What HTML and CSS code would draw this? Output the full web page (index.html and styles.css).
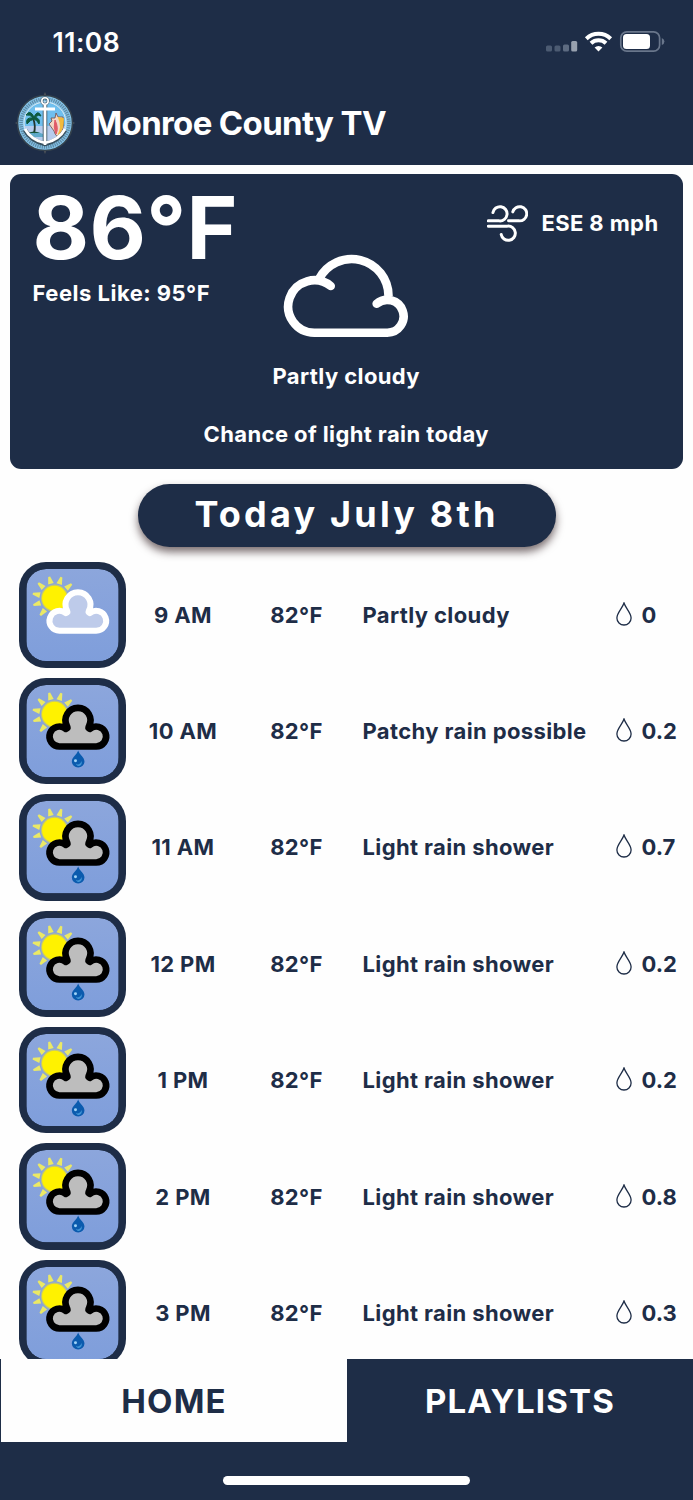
FILE: index.html
```
<!DOCTYPE html>
<html lang="en">
<head>
  <meta charset="UTF-8">
  <title>Monroe County TV</title>
  <link rel="stylesheet" href="styles.css">
</head>
<body>

<!-- shared icons -->
<svg class="defs" width="0" height="0">
  <defs>
    <linearGradient id="sky" x1="0" y1="0" x2="0" y2="1">
      <stop offset="0" stop-color="#8ca6dc"/>
      <stop offset="1" stop-color="#7f9edb"/>
    </linearGradient>
    <path id="ray" d="M-8.500 -45 L8.500 -45 L3 -67 L-3 -67 Z"/>
    <path id="puff" d="M100 185 A30 30 0 1 1 119 132 L124 129 L122.500 124 A37.500 37.500 0 1 1 188.500 124 L187 129 L191 132 A30 30 0 1 1 210 185 Z"/>
    <symbol id="sun" viewBox="0 0 278 278">
      <rect width="278" height="278" fill="url(#sky)"/>
      <g transform="translate(85 88)">
        <g fill="#ebe965">
          <use href="#ray" transform="rotate(-140)"/>
          <use href="#ray" transform="rotate(-108)"/>
          <use href="#ray" transform="rotate(-78)"/>
          <use href="#ray" transform="rotate(-47)"/>
          <use href="#ray" transform="rotate(-14)"/>
          <use href="#ray" transform="rotate(18)"/>
          <use href="#ray" transform="rotate(50)"/>
        </g>
        <circle r="41" fill="#bfc47a"/>
        <circle r="37.500" fill="#fff200"/>
      </g>
    </symbol>
    <symbol id="partly" viewBox="0 0 278 278">
      <use href="#sun" width="278" height="278"/>
      <use href="#puff" y="1" fill="#becbea" stroke="#fff" stroke-width="18" stroke-linejoin="round"/>
    </symbol>
    <symbol id="rain" viewBox="0 0 278 278">
      <use href="#sun" width="278" height="278"/>
      <use href="#puff" fill="#bdbdbd" stroke="#000" stroke-width="20" stroke-linejoin="round"/>
      <path d="M156 197 C160 210 175 217 175 230 A19 18 0 0 1 137 230 C137 217 152 210 156 197 Z" fill="#0b5bae"/>
      <path d="M149 236 C153 241 163 240 166 229 C171 243 154 250 149 236 Z" fill="#3f94d6"/>
      <circle cx="148" cy="228" r="4.500" fill="#9fd2f7"/>
    </symbol>
    <symbol id="drop" viewBox="0 0 16 24">
      <path d="M8 1 C6.500 6 0.900 11 0.900 15.900 A7.100 7.100 0 0 0 15.100 15.900 C15.100 11 9.500 6 8 1 Z" fill="none" stroke="#1e2d47" stroke-width="1.300"/>
    </symbol>
  </defs>
</svg>

<div class="phone">
  <div class="status-bar">
    <span class="clock">11:08</span>
    <svg class="status-icons" width="120" height="24" viewBox="0 0 120 24">
      <rect x="0" y="15.500" width="6" height="6" rx="1.500" fill="#4c5b72"/>
      <rect x="8.500" y="15.500" width="6" height="6" rx="1.500" fill="#4c5b72"/>
      <rect x="17" y="14.500" width="6" height="7" rx="1.500" fill="#5d6b81"/>
      <rect x="25.200" y="11" width="6" height="10.500" rx="1.500" fill="#98a1af"/>
      <g fill="none" stroke="#fff" stroke-width="4">
        <path d="M40.300 8.700 A17.800 17.800 0 0 1 64.700 8.700"/>
        <path d="M45 13.300 A11 11 0 0 1 60 13.300"/>
      </g>
      <path d="M52.500 21.500 L48.600 17.500 A5.600 5.600 0 0 1 56.400 17.500 Z" fill="#fff"/>
      <rect x="74.800" y="1.800" width="38.800" height="19.400" rx="6" fill="none" stroke="#69768b" stroke-width="1.700"/>
      <rect x="77" y="4" width="27" height="15" rx="3.500" fill="#fff"/>
      <path d="M115.800 8 Q118.400 9 118.400 11.500 Q118.400 14 115.800 15 Z" fill="#69768b"/>
    </svg>
  </div>

  <header class="app-header">
    <svg class="seal" width="60" height="62" viewBox="-30 -31 60 62">
      <path d="M0 -31 L2 -26 H-2 Z M0 31 L2 26 H-2 Z M-30 0 L-26 -2 V2 Z M30 0 L26 -2 V2 Z" fill="#50555b"/>
      <circle r="27.500" fill="#85c3e8" stroke="#35424d" stroke-width="1.600"/>
      <circle r="24" fill="none" stroke="#5f8ba6" stroke-width="3.500" stroke-dasharray="1.200 1"/>
      <circle r="21" fill="#6fbfee" stroke="#dceaf2" stroke-width="1"/>
      <path d="M-20.500 3 H20.500 A21 21 0 0 1 -20.500 3 Z" fill="#b7cdee"/>
      <path d="M-18 11 Q-10 7 -2 11 L-2 14 H-16 Z" fill="#5fa9c9"/>
      <!-- palm -->
      <path d="M-12 -5 Q-9 3 -11 10" fill="none" stroke="#23342b" stroke-width="1.800"/>
      <path d="M-11 -6 Q-15 -14 -19 -8 Q-15 -9 -12 -5 Q-20 -6 -18 1 Q-15 -3 -11 -4 Q-8 -3 -6 1 Q-4 -4 -10 -6 Q-6 -9 -4 -7 Q-7 -14 -11 -6 Z" fill="#0d5a3f" stroke="#0d5a3f" stroke-width="1"/>
      <path d="M-17 10 Q-11 7 -5 10 Z" fill="#17553c"/>
      <!-- conch shell -->
      <path d="M11 -10 L13 -6 L18 -6 Q20 4 15 13 Q11 15 9 8 L4 1 L7 -2 L6 -5 L10 -5 Z" fill="#f3d6c4" stroke="#6d4b48" stroke-width=".8"/>
      <path d="M14 -5 Q18 4 13.500 12 Q18 5 18 -4 Z" fill="#f2ba3d" stroke="#f2ba3d" stroke-width="1.800"/>
      <path d="M10 -3 Q14 5 11 11 Q8 4 10 -3 Z" fill="#e05a68" stroke="#e05a68" stroke-width="1"/>
      <!-- anchor -->
      <path d="M-20 7 Q-14 18 0 21 Q14 18 20 7 M0 -18 V22" fill="none" stroke="#37505f" stroke-width="4.500"/>
      <circle cy="-22" r="3.200" fill="none" stroke="#4b6474" stroke-width="3"/>
      <path d="M-20 6 Q-14 17 0 20 Q14 17 20 6 M0 -18 V22 M-10 -14 H10" fill="none" stroke="#fff" stroke-width="2.800"/>
      <circle cy="-22" r="3.200" fill="none" stroke="#fff" stroke-width="1.600"/>
    </svg>
    <h1>Monroe County TV</h1>
  </header>

  <section class="current">
    <div class="temps">
      <div class="temp">86°F</div>
      <div class="feels">Feels Like: 95°F</div>
    </div>
    <div class="sky">
      <svg width="126" height="84" viewBox="283 254 126 84">
        <g fill="none" stroke="#fff" stroke-width="8.600" stroke-linecap="round">
          <path d="M330.700 286 A26.200 26.200 0 1 0 314.300 332.700 H387.300 A16.400 16.400 0 1 0 376.700 303.700"/>
          <path d="M319 279 A36.800 36.800 0 0 1 388.500 296" stroke-linecap="butt"/>
        </g>
      </svg>
      <p>Partly cloudy</p>
    </div>
    <div class="wind">
      <svg width="41" height="39" viewBox="200 118 124 118">
        <path d="M204 169 H237 A21.500 21.500 0 1 0 218 144 M265 169 H297 A21.500 21.500 0 1 0 278 142 M204 185 H262 A21.500 21.500 0 1 1 243 210" fill="none" stroke="#fff" stroke-width="9" stroke-linecap="round"/>
      </svg>
      <span>ESE 8 mph</span>
    </div>
    <p class="summary">Chance of light rain today</p>
  </section>

  <div class="day"><span>Today July 8th</span></div>

  <main class="hours">
    <div class="hour">
      <svg class="pic"><use href="#partly"/></svg>
      <span class="time">9 AM</span><span class="deg">82°F</span><span class="cond">Partly cloudy</span>
      <span class="rain"><svg width="16" height="24"><use href="#drop"/></svg>0</span>
    </div>
    <div class="hour">
      <svg class="pic"><use href="#rain"/></svg>
      <span class="time">10 AM</span><span class="deg">82°F</span><span class="cond">Patchy rain possible</span>
      <span class="rain"><svg width="16" height="24"><use href="#drop"/></svg>0.2</span>
    </div>
    <div class="hour">
      <svg class="pic"><use href="#rain"/></svg>
      <span class="time">11 AM</span><span class="deg">82°F</span><span class="cond">Light rain shower</span>
      <span class="rain"><svg width="16" height="24"><use href="#drop"/></svg>0.7</span>
    </div>
    <div class="hour">
      <svg class="pic"><use href="#rain"/></svg>
      <span class="time">12 PM</span><span class="deg">82°F</span><span class="cond">Light rain shower</span>
      <span class="rain"><svg width="16" height="24"><use href="#drop"/></svg>0.2</span>
    </div>
    <div class="hour">
      <svg class="pic"><use href="#rain"/></svg>
      <span class="time">1 PM</span><span class="deg">82°F</span><span class="cond">Light rain shower</span>
      <span class="rain"><svg width="16" height="24"><use href="#drop"/></svg>0.2</span>
    </div>
    <div class="hour">
      <svg class="pic"><use href="#rain"/></svg>
      <span class="time">2 PM</span><span class="deg">82°F</span><span class="cond">Light rain shower</span>
      <span class="rain"><svg width="16" height="24"><use href="#drop"/></svg>0.8</span>
    </div>
    <div class="hour">
      <svg class="pic"><use href="#rain"/></svg>
      <span class="time">3 PM</span><span class="deg">82°F</span><span class="cond">Light rain shower</span>
      <span class="rain"><svg width="16" height="24"><use href="#drop"/></svg>0.3</span>
    </div>
  </main>

  <nav class="tabs">
    <a class="tab active">HOME</a>
    <a class="tab">PLAYLISTS</a>
  </nav>
  <div class="home-bar"><div class="indicator"></div></div>
</div>

</body>
</html>
```
FILE: styles.css
```
* { box-sizing: border-box; margin: 0; padding: 0; }

body {
  background: #fefefe;
  color: #1e2d47;
  font-family: Inter, "Liberation Sans", sans-serif;
  font-weight: 700;
}

svg { display: block; flex-shrink: 0; }

.defs { position: absolute; }

.phone {
  display: flex;
  flex-direction: column;
  width: 693px;
  height: 1500px;
  overflow: hidden;
}

.status-bar {
  display: flex;
  justify-content: space-between;
  height: 83px;
  padding: 29px 27px 0 52.5px;
  background: #1e2d47;
  color: #fff;
  flex-shrink: 0;
}

.clock {
  font-size: 26.5px;
  font-weight: 600;
  line-height: 26px;
  letter-spacing: 0.5px;
}

.status-icons { margin-top: 1px; }

.app-header {
  display: flex;
  align-items: center;
  gap: 16.5px;
  height: 81.5px;
  padding: 0 0 2px 15px;
  background: #1e2d47;
  color: #fff;
  flex-shrink: 0;
}

.app-header h1 {
  font-size: 33px;
  font-weight: 700;
  line-height: 40px;
  letter-spacing: -0.65px;
}

.current {
  display: grid;
  grid-template-columns: 1fr 150px 1fr;
  grid-template-rows: 222px 1fr;
  height: 295px;
  margin: 9.5px 10.5px 0 10px;
  border-radius: 11px;
  background: #1e2d47;
  color: #fff;
  font-size: 22px;
  line-height: 28px;
  letter-spacing: 0.4px;
  white-space: nowrap;
  flex-shrink: 0;
}

.temps { padding: 13.5px 0 0 22.5px; }

.temp {
  font-size: 87px;
  line-height: 80px;
  letter-spacing: 0.3px;
}

.feels {
  margin-top: 11.5px;
  letter-spacing: 0.5px;
}

.sky {
  display: flex;
  flex-direction: column;
  align-items: center;
  padding-top: 80px;
}

.sky p { margin-top: 24px; }

.wind {
  display: flex;
  align-items: center;
  justify-content: flex-end;
  gap: 13px;
  height: 39px;
  margin: 29.5px 24px 0 0;
}

.summary {
  grid-column: 1 / -1;
  padding-top: 23.5px;
  text-align: center;
}

.day {
  width: 418px;
  height: 63px;
  margin: 15px auto 0;
  border-radius: 32px;
  background: #1e2d47;
  box-shadow: 0 5px 8px rgba(50, 32, 35, 0.65);
  color: #fff;
  font-size: 36px;
  line-height: 61px;
  letter-spacing: 3.2px;
  text-align: center;
  flex-shrink: 0;
}

.hours {
  display: flex;
  flex-direction: column;
  gap: 10px;
  flex: 1;
  min-height: 0;
  padding: 14.5px 0 0 19px;
  overflow: hidden;
}

.hour {
  display: grid;
  grid-template-columns: 107px 114px 113px 1fr 77px;
  align-items: center;
  height: 106.4px;
  font-size: 22px;
  letter-spacing: 0.38px;
  white-space: nowrap;
  flex-shrink: 0;
}

.pic {
  width: 107px;
  height: 106.4px;
  padding: 7px;
  border-radius: 27px;
  background: #1e2d47;
}

.pic use { clip-path: inset(0 round 20px); }

.time, .deg { text-align: center; }

.cond { padding-left: 9.5px; }

.rain {
  display: flex;
  align-items: center;
  gap: 9.5px;
  letter-spacing: 0;
}

.rain svg { margin-top: -2px; }

.tabs {
  display: flex;
  height: 83px;
  padding-left: 1px;
  background: #1e2d47;
  flex-shrink: 0;
}

.tab {
  flex: 1;
  color: #fff;
  font-size: 33px;
  line-height: 84px;
  letter-spacing: 1.2px;
  text-align: center;
}

.tab.active {
  background: #fefefe;
  color: #1e2d47;
}

.home-bar {
  height: 58px;
  padding-top: 33.5px;
  background: #1e2d47;
  flex-shrink: 0;
}

.indicator {
  width: 247px;
  height: 9px;
  margin: 0 auto;
  border-radius: 5px;
  background: #fff;
}
```
